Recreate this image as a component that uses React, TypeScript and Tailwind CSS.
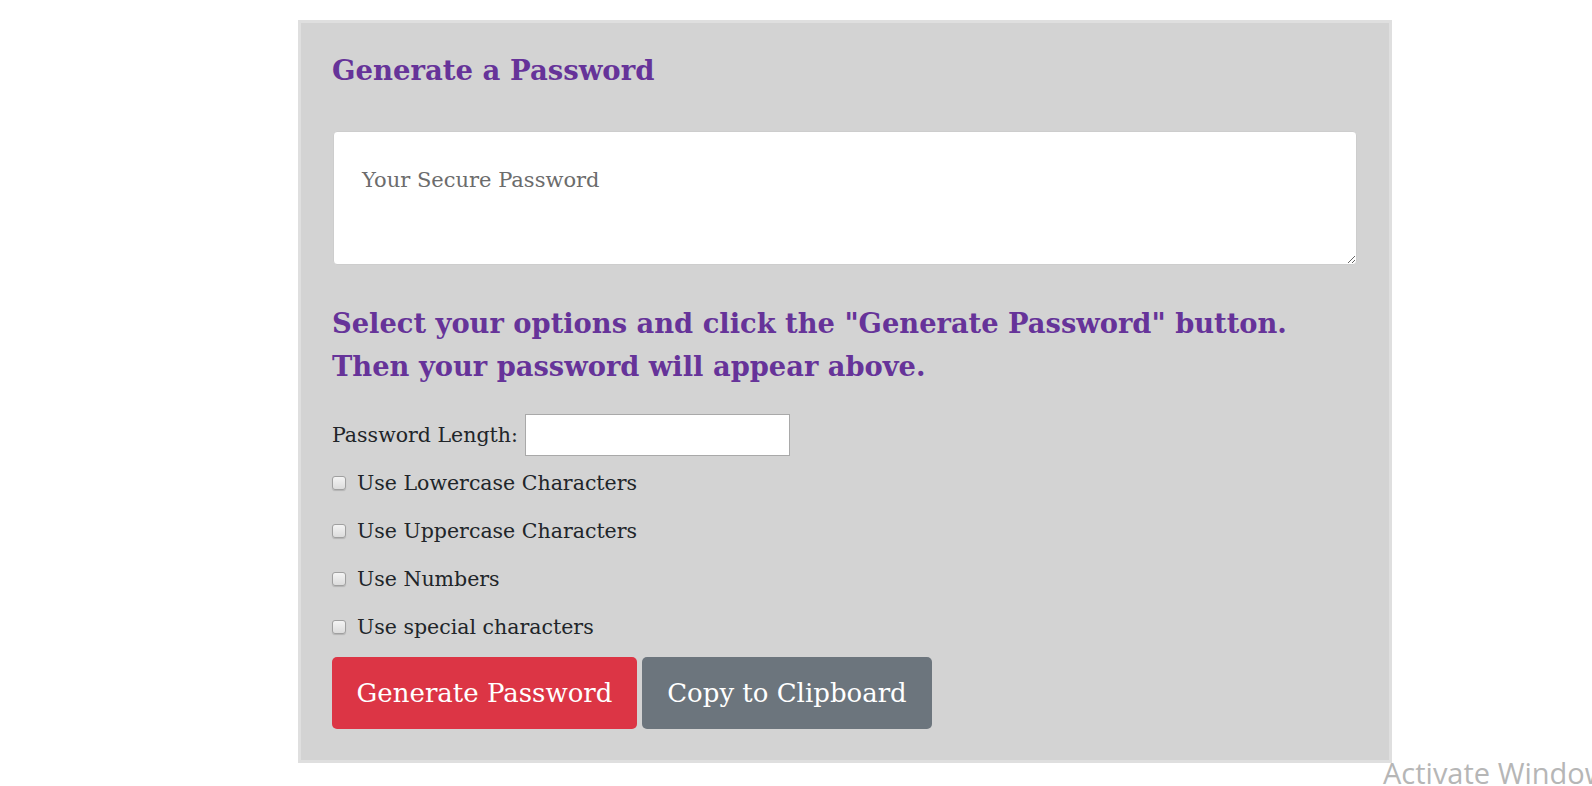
const serif = { fontFamily: '"DejaVu Serif", Georgia, serif' }

const OPTIONS = [
  'Use Lowercase Characters',
  'Use Uppercase Characters',
  'Use Numbers',
  'Use special characters',
]

export default function App() {
  return (
    <div className="relative min-h-screen overflow-hidden bg-white" style={serif}>
      <div className="ml-[298px] mt-[20px] w-[1094px] border-[3px] border-[#dfdfdf] bg-[#d3d3d3] px-[31px] pb-[31px] pt-[29px]">
        <h1 className="text-[27.5px] font-bold leading-[36px] text-[#663399]">Generate a Password</h1>

        <textarea
          readOnly
          placeholder="Your Secure Password"
          className="mt-[43px] ml-[1px] block h-[134px] w-[1024px] rounded border border-[#cdcdcd] bg-white px-[28px] py-[34px] text-[21px] leading-[28px] text-[#495057] placeholder:text-[#6c6c6c]"
        />

        <h2 className="mt-[37px] text-[27.3px] font-bold leading-[43px] text-[#663399]">
          Select your options and click the "Generate Password" button.
          <br />
          Then your password will appear above.
        </h2>

        <div className="mt-[26px] flex items-center text-[20.5px] text-[#212529]">
          <label htmlFor="len">Password Length:</label>
          <input id="len" type="number" className="ml-[7px] h-[42px] w-[265px] border border-[#a9a9a9] bg-white" />
        </div>

        <div className="mt-[3px] flex flex-col">
          {OPTIONS.map((o) => (
            <label key={o} className="flex h-[48px] items-center text-[20.5px] text-[#212529]">
              <input
                type="checkbox"
                className="mr-[11px] h-[14px] w-[14px] appearance-none rounded-[3px] border border-[#a0a0a0] bg-gradient-to-b from-[#f4f4f4] to-[#dcdcdc] shadow-[0_1px_1px_rgba(0,0,0,0.15)]"
              />
              {o}
            </label>
          ))}
        </div>

        <div className="mt-[6px] flex gap-[5px]">
          <button className="h-[72px] w-[305px] rounded-[5px] bg-[#dc3545] text-[26px] text-white">Generate Password</button>
          <button className="h-[72px] w-[290px] rounded-[5px] bg-[#6c757d] text-[26px] text-white">Copy to Clipboard</button>
        </div>
      </div>

      <div
        className="absolute left-[1383px] top-[758px] whitespace-nowrap text-[29px] leading-none text-[#b6b6b6]"
        style={{ fontFamily: '"Open Sans", "Noto Sans", sans-serif' }}
      >
        Activate Windows
      </div>
    </div>
  )
}
